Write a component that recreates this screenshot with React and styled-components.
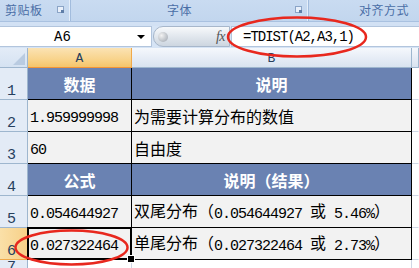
import React from 'react';
import styled, { createGlobalStyle } from 'styled-components';

const Global = createGlobalStyle`
  html, body { margin: 0; padding: 0; background: #fff; }
  * { box-sizing: border-box; }
`;

const Page = styled.div`
  position: relative;
  width: 419px;
  height: 268px;
  overflow: hidden;
  background: #d6e4f5;
  font-family: "Noto Sans CJK SC", sans-serif;
`;

const Ribbon = styled.div`
  display: flex;
  height: 22px;
  background: linear-gradient(#c9dbf1, #c2d6ee);
  border-bottom: 1px solid #a9c1e0;
`;

const Group = styled.div`
  position: relative;
  display: flex;
  align-items: center;
  justify-content: ${p => p.$align || 'center'};
  width: ${p => p.$w}px;
  flex: none;
  padding: 0 ${p => p.$pr || 0}px 2px ${p => p.$pl || 0}px;
  border-right: 1px solid #a2bcdd;
  box-shadow: inset -1px 0 0 #e4eefa;
`;

const GroupLabel = styled.span`
  font-size: 12px;
  line-height: 1;
  color: #4a6ea6;
  letter-spacing: 0.5px;
`;

const Launcher = styled.span`
  position: absolute;
  top: 6px;
  right: 6px;
  width: 7px;
  height: 7px;
  border: 1px solid #8ba4c6;
  background: #e9f0fa;
  &::after {
    content: '';
    position: absolute;
    right: -1px;
    bottom: -1px;
    width: 3px;
    height: 3px;
    background: #5f7ea8;
  }
`;

const Strip = styled.div`
  height: 4px;
  background: #d2e1f4;
`;

const FormulaBar = styled.div`
  display: flex;
  height: 21px;
  margin-bottom: 1px;
`;

const NameBox = styled.div`
  display: flex;
  align-items: center;
  width: 152px;
  background: #fff;
  border: 1px solid #b2c5dd;
  border-left: none;
  padding: 0 4px 0 0;
`;

const NameText = styled.span`
  flex: 1;
  text-align: center;
  padding-right: 12px;
  font-family: "Liberation Mono", monospace;
  font-size: 14px;
  color: #000;
`;

const Arrow = styled.span`
  width: 0;
  height: 0;
  border-left: 4px solid transparent;
  border-right: 4px solid transparent;
  border-top: 4px solid #000;
  margin-right: 2px;
`;

const FxPill = styled.div`
  display: flex;
  align-items: center;
  justify-content: space-between;
  width: 77px;
  margin-left: 1px;
  padding: 0 4px 0 4px;
  border: 1px solid #a7b7cb;
  border-radius: 10px 0 0 10px;
  background: linear-gradient(#f7f9fb, #dfe5ec 55%, #cdd6e0);
`;

const Knob = styled.span`
  width: 10px;
  height: 10px;
  border-radius: 50%;
  background: radial-gradient(circle at 35% 35%, #f2f2f2, #9ba3ad);
`;

const Fx = styled.span`
  font-family: "Liberation Serif", serif;
  font-style: italic;
  font-size: 14px;
  color: #555;
  letter-spacing: -0.5px;
`;

const FormulaInput = styled.div`
  flex: 1;
  display: flex;
  align-items: center;
  margin-left: 1px;
  padding-left: 11px;
  background: #fff;
  border: 1px solid #b2c5dd;
  border-right: none;
  font-family: "Liberation Mono", monospace;
  font-size: 14px;
  letter-spacing: -1px;
  color: #000;
`;

const Sheet = styled.div`
  display: grid;
  grid-template-columns: 28px 104px 280px 1fr;
  grid-template-rows: 20px repeat(6, 32px) 1fr;
  height: 220px;
  margin-top: 1px;
  background: #fff;
`;

const Corner = styled.div`
  position: relative;
  background: linear-gradient(#e3ecf7, #d5e2f2);
  border-right: 1px solid #9eb6ce;
  border-bottom: 1px solid #9eb6ce;
  &::after {
    content: '';
    position: absolute;
    right: 2px;
    bottom: 2px;
    width: 0;
    height: 0;
    border-left: 12px solid transparent;
    border-bottom: 12px solid #b9cbe1;
  }
`;

const ColHead = styled.div`
  display: flex;
  align-items: flex-end;
  justify-content: center;
  padding-bottom: 1px;
  font-family: "Liberation Mono", monospace;
  font-size: 13px;
  color: #27405e;
  background: ${p => p.$active
    ? 'linear-gradient(#fbe3b4, #f8d38b 60%, #f4c46a)'
    : 'linear-gradient(#f5f8fc, #e4ebf5 60%, #d9e3f0)'};
  border-right: 1px solid ${p => p.$active ? '#f0a94a' : '#9eb6ce'};
  border-bottom: 1px solid ${p => p.$active ? '#f29436' : '#9eb6ce'};
`;

const RowHead = styled.div`
  display: flex;
  align-items: flex-end;
  justify-content: center;
  padding: 0 4px 0 0;
  font-family: "Liberation Mono", monospace;
  font-size: 15px;
  line-height: 1;
  color: #27405e;
  background: ${p => p.$active ? 'linear-gradient(90deg, #fae0a8, #f7d088)' : '#e3ebf6'};
  border-right: 1px solid ${p => p.$active ? '#f29436' : '#9eb6ce'};
  border-bottom: 1px solid ${p => p.$active ? '#f0a94a' : '#9eb6ce'};
`;

const Cell = styled.div`
  position: relative;
  display: flex;
  align-items: center;
  justify-content: ${p => p.$head ? 'center' : 'flex-start'};
  padding-left: ${p => p.$head ? 0 : 2}px;
  white-space: nowrap;
  font-size: 16px;
  font-weight: ${p => p.$head ? 700 : 400};
  color: ${p => p.$head ? '#fff' : '#000'};
  background: ${p => p.$head ? '#6a82b2' : '#f2f2f2'};
  border-right: 1px solid #000;
  border-bottom: 1px solid #000;

  ${p => p.$selected && `
    &::after {
      content: '';
      position: absolute;
      left: -1px;
      top: -1px;
      right: -1px;
      bottom: -1px;
      border: 2px solid #000;
    }
    &::before {
      content: '';
      position: absolute;
      right: -4px;
      bottom: -4px;
      width: 6px;
      height: 6px;
      background: #000;
      border: 1px solid #fff;
      z-index: 1;
    }
  `}
`;

const Content = styled.span`
  line-height: 22px;
`;

const Blank = styled.div`
  background: #fff;
  border-right: 1px solid ${p => p.$edge ? 'transparent' : '#d0d7e5'};
  border-bottom: 1px solid #d0d7e5;
`;

const Num = styled.span`
  position: relative;
  top: 1px;
  font-family: "Liberation Mono", monospace;
  font-size: 15px;
  letter-spacing: -1px;
  white-space: pre;
`;

const Marks = styled.svg`
  position: absolute;
  left: 0;
  top: 0;
  pointer-events: none;
`;

const rows = [
  { n: 1, head: true, a: '数据', b: '说明' },
  { n: 2, a: <Num>1.959999998</Num>, b: '为需要计算分布的数值' },
  { n: 3, a: <Num>60</Num>, b: '自由度' },
  { n: 4, head: true, a: '公式', b: '说明（结果）' },
  { n: 5, a: <Num>0.054644927</Num>, b: <>双尾分布（<Num>0.054644927 </Num>或<Num> 5.46%</Num>）</> },
  { n: 6, a: <Num>0.027322464</Num>, b: <>单尾分布（<Num>0.027322464 </Num>或<Num> 2.73%</Num>）</>, sel: true },
];

export default function App() {
  return (
    <Page>
      <Global />
      <Ribbon>
        <Group $w={71} $align="flex-start" $pl={5}>
          <GroupLabel>剪贴板</GroupLabel>
          <Launcher />
        </Group>
        <Group $w={238} $pr={20}>
          <GroupLabel>字体</GroupLabel>
          <Launcher />
        </Group>
        <Group $w={140} $align="flex-start" $pl={50}>
          <GroupLabel>对齐方式</GroupLabel>
        </Group>
      </Ribbon>
      <Strip />
      <FormulaBar>
        <NameBox>
          <NameText>A6</NameText>
          <Arrow />
        </NameBox>
        <FxPill>
          <Knob />
          <Fx>fx</Fx>
        </FxPill>
        <FormulaInput>=TDIST(A2,A3,1)</FormulaInput>
      </FormulaBar>
      <Sheet>
        <Corner />
        <ColHead $active>A</ColHead>
        <ColHead>B</ColHead>
        <ColHead />
        {rows.map(r => (
          <React.Fragment key={r.n}>
            <RowHead $active={r.sel}>{r.n}</RowHead>
            <Cell $head={r.head} $selected={r.sel}><Content>{r.a}</Content></Cell>
            <Cell $head={r.head}><Content>{r.b}</Content></Cell>
            <Blank $edge />
          </React.Fragment>
        ))}
        <RowHead>7</RowHead>
        <Blank />
        <Blank />
        <Blank $edge />
      </Sheet>
      <Marks width="419" height="268">
        <ellipse cx="297" cy="37" rx="69" ry="19.5" fill="none" stroke="#e8281e" strokeWidth="2.5" />
        <ellipse cx="71.5" cy="247.5" rx="56" ry="17" fill="none" stroke="#e8281e" strokeWidth="2.5" />
      </Marks>
    </Page>
  );
}
